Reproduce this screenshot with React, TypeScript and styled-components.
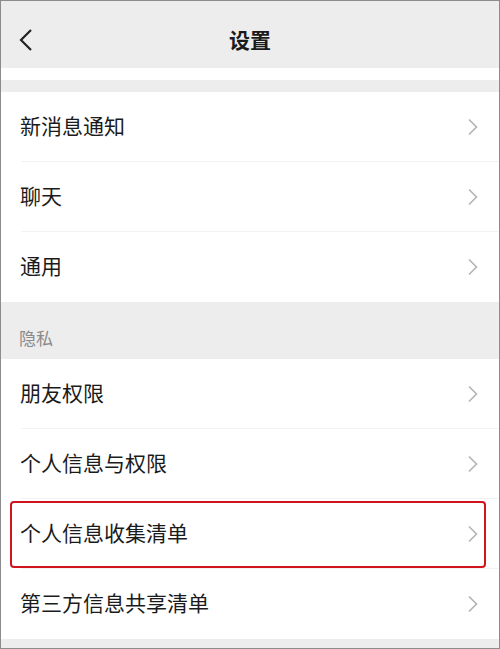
import React, { FC } from 'react';
import styled, { createGlobalStyle } from 'styled-components';

const GlobalStyle = createGlobalStyle`
  html, body {
    margin: 0;
    padding: 0;
    background: #ededed;
  }
  * {
    box-sizing: border-box;
  }
`;

const Frame = styled.div`
  width: 500px;
  height: 649px;
  border: 1px solid #8c8c8c;
  background: #ededed;
  overflow: hidden;
  font-family: "Noto Sans CJK SC", "Noto Sans", sans-serif;
  color: #1b1b1b;
  display: flex;
  flex-direction: column;
`;

const NavBar = styled.div`
  height: 67px;
  display: grid;
  grid-template-columns: 60px 1fr 60px;
  align-items: center;
  background: #ededed;
  flex-shrink: 0;
`;

const BackButton = styled.div`
  display: flex;
  align-items: center;
  padding-left: 17px;
  padding-top: 10px;
`;

const Title = styled.div`
  text-align: center;
  font-size: 21px;
  font-weight: 600;
  padding-top: 8px;
`;

const Strip = styled.div<{ $white?: boolean; $h: number }>`
  height: ${(p) => p.$h}px;
  background: ${(p) => (p.$white ? '#ffffff' : '#ededed')};
  flex-shrink: 0;
`;

const Group = styled.div`
  background: #ffffff;
  display: flex;
  flex-direction: column;
`;

const Row = styled.div<{ $last?: boolean }>`
  position: relative;
  height: 70px;
  display: flex;
  align-items: center;
  justify-content: space-between;
  padding: 0 20px 0 19px;
  &::after {
    content: '';
    display: ${(p) => (p.$last ? 'none' : 'block')};
    position: absolute;
    left: 20px;
    right: 0;
    bottom: 0;
    height: 1px;
    background: #f2f2f2;
  }
`;

const Label = styled.span`
  font-size: 21px;
  line-height: 1;
  margin-top: -4px;
`;

const SectionHeader = styled.div`
  height: 57px;
  display: flex;
  align-items: flex-end;
  padding: 0 0 9px 18px;
  font-size: 17px;
  color: #8a8a8a;
  background: #ededed;
`;

const Highlight = styled.div`
  position: absolute;
  left: 9px;
  right: 13px;
  top: 2px;
  bottom: 1px;
  border: 2px solid #d0141c;
  border-radius: 4px;
  pointer-events: none;
`;

const Chevron: FC = () => (
  <svg width="12" height="18" viewBox="0 0 12 18">
    <path d="M2 1.5 L9.5 9 L2 16.5" fill="none" stroke="#b3b3b3" strokeWidth="1.6" />
  </svg>
);

const BackIcon: FC = () => (
  <svg width="16" height="24" viewBox="0 0 16 24">
    <path d="M13 2 L3 12 L13 22" fill="none" stroke="#222" strokeWidth="2.2" />
  </svg>
);

interface Item {
  label: string;
  highlight?: boolean;
}

const general: Item[] = [{ label: '新消息通知' }, { label: '聊天' }, { label: '通用' }];
const privacy: Item[] = [
  { label: '朋友权限' },
  { label: '个人信息与权限' },
  { label: '个人信息收集清单', highlight: true },
  { label: '第三方信息共享清单' },
];

const renderRows = (items: Item[]) =>
  items.map((item, i) => (
    <Row key={item.label} $last={i === items.length - 1}>
      <Label>{item.label}</Label>
      <Chevron />
      {item.highlight && <Highlight />}
    </Row>
  ));

const App: FC = () => (
  <>
    <GlobalStyle />
    <Frame>
      <NavBar>
        <BackButton>
          <BackIcon />
        </BackButton>
        <Title>设置</Title>
        <div />
      </NavBar>
      <Strip $white $h={12} />
      <Strip $h={12} />
      <Group>{renderRows(general)}</Group>
      <SectionHeader>隐私</SectionHeader>
      <Group>{renderRows(privacy)}</Group>
    </Frame>
  </>
);

export default App;
